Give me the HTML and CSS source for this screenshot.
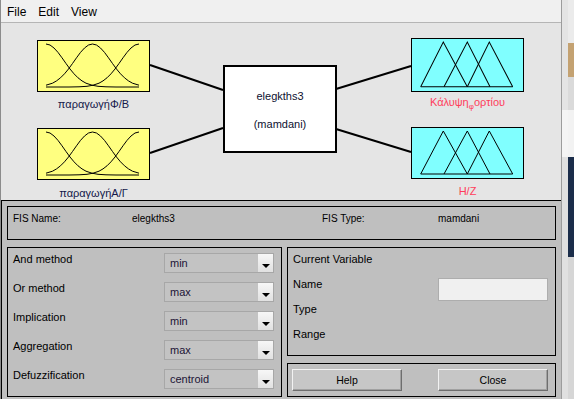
FILE: index.html
```html
<!DOCTYPE html>
<html lang="el">
<head>
	<meta charset="UTF-8">
	<meta name="viewport" content="width=device-width, initial-scale=1.0">
	<title>FIS Editor: elegkths3</title>
	<link rel="stylesheet" href="styles.css">
</head>
<body>
	<div id="screen">
		<div id="fiswin">
			<div id="menubar">
				<span>File</span>
				<span>Edit</span>
				<span>View</span>
			</div>

			<!-- block diagram of the system -->
			<div id="diagram">
				<svg id="wires" width="560" height="177">
					<line x1="149" y1="42" x2="222" y2="67"/>
					<line x1="149" y1="130" x2="222" y2="105"/>
					<line x1="335" y1="66" x2="410" y2="43"/>
					<line x1="335" y1="106" x2="410" y2="129"/>
				</svg>

				<div class="node input" id="in1">
					<div class="mf">
						<svg viewBox="0 0 111 50" preserveAspectRatio="none">
							<polyline points="8,3 12,4 16,7 20,11.4 24,16.8 28,22.5 32,28 36,32.8 40,36.8 44,39.9 48,42.2 54,44.2 60,45.3 68,45.8 78,46 101,46"/>
							<polyline points="8,44.2 14.5,42.2 18.5,39.9 22.5,36.8 26.5,32.8 30.5,28 34.5,22.5 38.5,16.8 42.5,11.4 46.5,7 50.5,4 54.5,3 58.5,4 62.5,7 66.5,11.4 70.5,16.8 74.5,22.5 78.5,28 82.5,32.8 86.5,36.8 90.5,39.9 94.5,42.2 101,44.2"/>
							<polyline points="101,3 97,4 93,7 89,11.4 85,16.8 81,22.5 77,28 73,32.8 69,36.8 65,39.9 61,42.2 55,44.2 49,45.3 41,45.8 31,46 8,46"/>
						</svg>
					</div>
					<div class="varname">παραγωγήΦ/Β</div>
				</div>

				<div class="node input" id="in2">
					<div class="mf">
						<svg viewBox="0 0 111 50" preserveAspectRatio="none">
							<polyline points="8,3 12,4 16,7 20,11.4 24,16.8 28,22.5 32,28 36,32.8 40,36.8 44,39.9 48,42.2 54,44.2 60,45.3 68,45.8 78,46 101,46"/>
							<polyline points="8,44.2 14.5,42.2 18.5,39.9 22.5,36.8 26.5,32.8 30.5,28 34.5,22.5 38.5,16.8 42.5,11.4 46.5,7 50.5,4 54.5,3 58.5,4 62.5,7 66.5,11.4 70.5,16.8 74.5,22.5 78.5,28 82.5,32.8 86.5,36.8 90.5,39.9 94.5,42.2 101,44.2"/>
							<polyline points="101,3 97,4 93,7 89,11.4 85,16.8 81,22.5 77,28 73,32.8 69,36.8 65,39.9 61,42.2 55,44.2 49,45.3 41,45.8 31,46 8,46"/>
						</svg>
					</div>
					<div class="varname">παραγωγήΑ/Γ</div>
				</div>

				<div id="fisbox">
					<span>elegkths3</span>
					<span>(mamdani)</span>
				</div>

				<div class="node output" id="out1">
					<div class="mf">
						<svg viewBox="0 0 111 50" preserveAspectRatio="none">
							<polyline points="8.7,46 31.3,3 55.3,46"/>
							<polyline points="32,46 55.3,3 78,46"/>
							<polyline points="55.3,46 77.3,3 100.7,46"/>
							<line x1="8.7" y1="46" x2="100.7" y2="46"/>
						</svg>
					</div>
					<div class="varname">Κάλυψη<sub>φ</sub>ορτίου</div>
				</div>

				<div class="node output" id="out2">
					<div class="mf">
						<svg viewBox="0 0 111 50" preserveAspectRatio="none">
							<polyline points="8.7,46 31.3,3 55.3,46"/>
							<polyline points="32,46 55.3,3 78,46"/>
							<polyline points="55.3,46 77.3,3 100.7,46"/>
							<line x1="8.7" y1="46" x2="100.7" y2="46"/>
						</svg>
					</div>
					<div class="varname">H/Z</div>
				</div>
			</div>

			<!-- controls -->
			<div id="controls">
				<div class="frame" id="fisinfo">
					<span>FIS Name:</span>
					<span>elegkths3</span>
					<span>FIS Type:</span>
					<span>mamdani</span>
				</div>

				<div class="frame" id="methods">
					<div class="method">
						<span>And method</span>
						<div class="popup"><span>min</span><b class="arrow"></b></div>
					</div>
					<div class="method">
						<span>Or method</span>
						<div class="popup"><span>max</span><b class="arrow"></b></div>
					</div>
					<div class="method">
						<span>Implication</span>
						<div class="popup"><span>min</span><b class="arrow"></b></div>
					</div>
					<div class="method">
						<span>Aggregation</span>
						<div class="popup"><span>max</span><b class="arrow"></b></div>
					</div>
					<div class="method">
						<span>Defuzzification</span>
						<div class="popup"><span>centroid</span><b class="arrow"></b></div>
					</div>
				</div>

				<div class="frame" id="current">
					<div class="title">Current Variable</div>
					<div class="field">
						<span>Name</span>
						<div class="editbox"></div>
					</div>
					<div id="vtype">Type</div>
					<div id="vrange">Range</div>
				</div>

				<div class="frame" id="buttons">
					<button class="btn">Help</button>
					<button class="btn">Close</button>
				</div>
			</div>
		</div>

		<div id="behind">
			<div class="edge"></div>
			<div class="peek">
				<div class="p1"></div>
				<div class="p2"></div>
				<div class="p3"></div>
				<div class="p4"></div>
				<div class="p5"></div>
				<div class="p6"></div>
			</div>
		</div>
	</div>
</body>
</html>
```

FILE: styles.css
```css
* {
	margin: 0;
	padding: 0;
	box-sizing: border-box;
}

body {
	width: 574px;
	height: 399px;
	overflow: hidden;
	font-family: 'Liberation Sans', Arial, sans-serif;
	font-size: 11px;
	color: #000;
	background: #d6d6d6;
}

#screen {
	display: flex;
	height: 399px;
}

#fiswin {
	width: 562px;
	height: 399px;
	display: flex;
	flex-direction: column;
	border-left: 1px solid #8c8c8c;
	border-right: 1px solid #9c9c9c;
}

#menubar {
	height: 23px;
	display: flex;
	gap: 12px;
	padding: 2px 0 0 6px;
	background: #f0f0f0;
	border-bottom: 1px solid #b5b5b5;
	font-size: 12px;
	line-height: 20px;
}

/* diagram */
#diagram {
	position: relative;
	height: 177px;
	background: #e5e5e5;
}

#wires {
	position: absolute;
	left: 0;
	top: 0;
}

#wires line {
	stroke: #000;
	stroke-width: 2;
}

.node {
	position: absolute;
	width: 113px;
}

.mf {
	height: 52px;
	border: 1px solid #000;
}

.mf svg {
	display: block;
	width: 100%;
	height: 100%;
}

.mf polyline, .mf line {
	fill: none;
	stroke: #000;
	stroke-width: 1;
}

.input .mf {
	background: #ffff80;
}

.output .mf {
	background: #80ffff;
}

.varname {
	text-align: center;
	white-space: nowrap;
	line-height: 13px;
	color: #14184a;
}

.output .varname {
	color: #ff3d5c;
}

.varname sub {
	font-size: 8px;
	line-height: 0;
	vertical-align: -3px;
}

#in1 { left: 36px; top: 17px; }
#in1 .varname { margin-top: 6px; }

#in2 { left: 36px; top: 105px; }
#in2 .varname { margin-top: 7px; }

#out1 { left: 410px; top: 15px; }
#out1 .mf { height: 54px; }
#out1 .varname { margin-top: 4px; }

#out2 { left: 410px; top: 104px; }
#out2 .varname { margin-top: 6px; }

#fisbox {
	position: absolute;
	left: 222px;
	top: 42px;
	width: 114px;
	height: 88px;
	display: flex;
	flex-direction: column;
	align-items: center;
	gap: 15px;
	padding-top: 23px;
	background: #fff;
	border: 2px solid #000;
	line-height: 13px;
	color: #0d1030;
}

/* controls */
#controls {
	flex: 1;
	display: grid;
	grid-template-columns: 275px 269px;
	grid-template-rows: 34px 109px 34px;
	gap: 7px 5px;
	padding: 5px 0 0 5px;
	background: #bfbfbf;
	border-top: 1px solid #000;
	border-left: 1px solid #000;
}

.frame {
	border: 1px solid #000;
}

#fisinfo {
	grid-column: 1 / 3;
	display: grid;
	grid-template-columns: 119px 190px 116px auto;
	align-items: start;
	padding: 5px 0 0 5px;
	font-size: 10px;
	line-height: 13px;
}

#methods {
	grid-row: 2 / 4;
	display: flex;
	flex-direction: column;
	gap: 9px;
	padding: 5px 7px 0 5px;
}

.method {
	display: flex;
	justify-content: space-between;
	height: 20px;
	line-height: 13px;
}

.popup {
	width: 110px;
	height: 20px;
	display: flex;
	background: #c3c3c3;
	border: 1px solid #a7a7a7;
	color: #1c1436;
}

.popup span {
	flex: 1;
	padding-left: 5px;
	line-height: 18px;
}

.arrow {
	width: 15px;
	display: flex;
	align-items: center;
	justify-content: center;
	padding-top: 5px;
	background: linear-gradient(#f7f7f7, #e1e1e1);
}

.arrow::after {
	content: '';
	border-left: 4px solid transparent;
	border-right: 4px solid transparent;
	border-top: 4px solid #000;
}

#current {
	padding: 5px 7px 0 5px;
	line-height: 13px;
}

.field {
	display: flex;
	justify-content: space-between;
	height: 23px;
	margin-top: 12px;
}

.editbox {
	width: 110px;
	height: 23px;
	background: #f0f0f0;
	border: 1px solid #adadad;
}

#vtype {
	margin-top: 2px;
}

#vrange {
	margin-top: 12px;
}

#buttons {
	display: flex;
	justify-content: space-between;
	padding: 5px 7px 0 4px;
}

.btn {
	width: 110px;
	height: 22px;
	font-family: 'Liberation Sans', Arial, sans-serif;
	font-size: 10.5px;
	color: #000;
	background: #c6c6c6;
	border: 1px solid;
	border-color: #f2f2f2 #6e6e6e #6e6e6e #f2f2f2;
	box-shadow: inset -1px -1px #a0a0a0;
}

/* sliver of the desktop behind the window */
#behind {
	width: 12px;
	display: flex;
}

#behind .edge {
	width: 6px;
	background: linear-gradient(#e4e4e4 110px, #f4f4f4 110px, #f4f4f4 157px, #e0e0e0 157px);
}

#behind .peek {
	flex: 1;
	display: flex;
	flex-direction: column;
}

.p1 { height: 43px; background: #ebebeb; }
.p2 { height: 34px; background: #c4a272; }
.p3 { height: 33px; background: #dadada; }
.p4 { height: 47px; background: #f2f2f2; }
.p5 { height: 100px; background: #1b2d4a; }
.p6 { flex: 1; background: #d6d6d6; }
```
